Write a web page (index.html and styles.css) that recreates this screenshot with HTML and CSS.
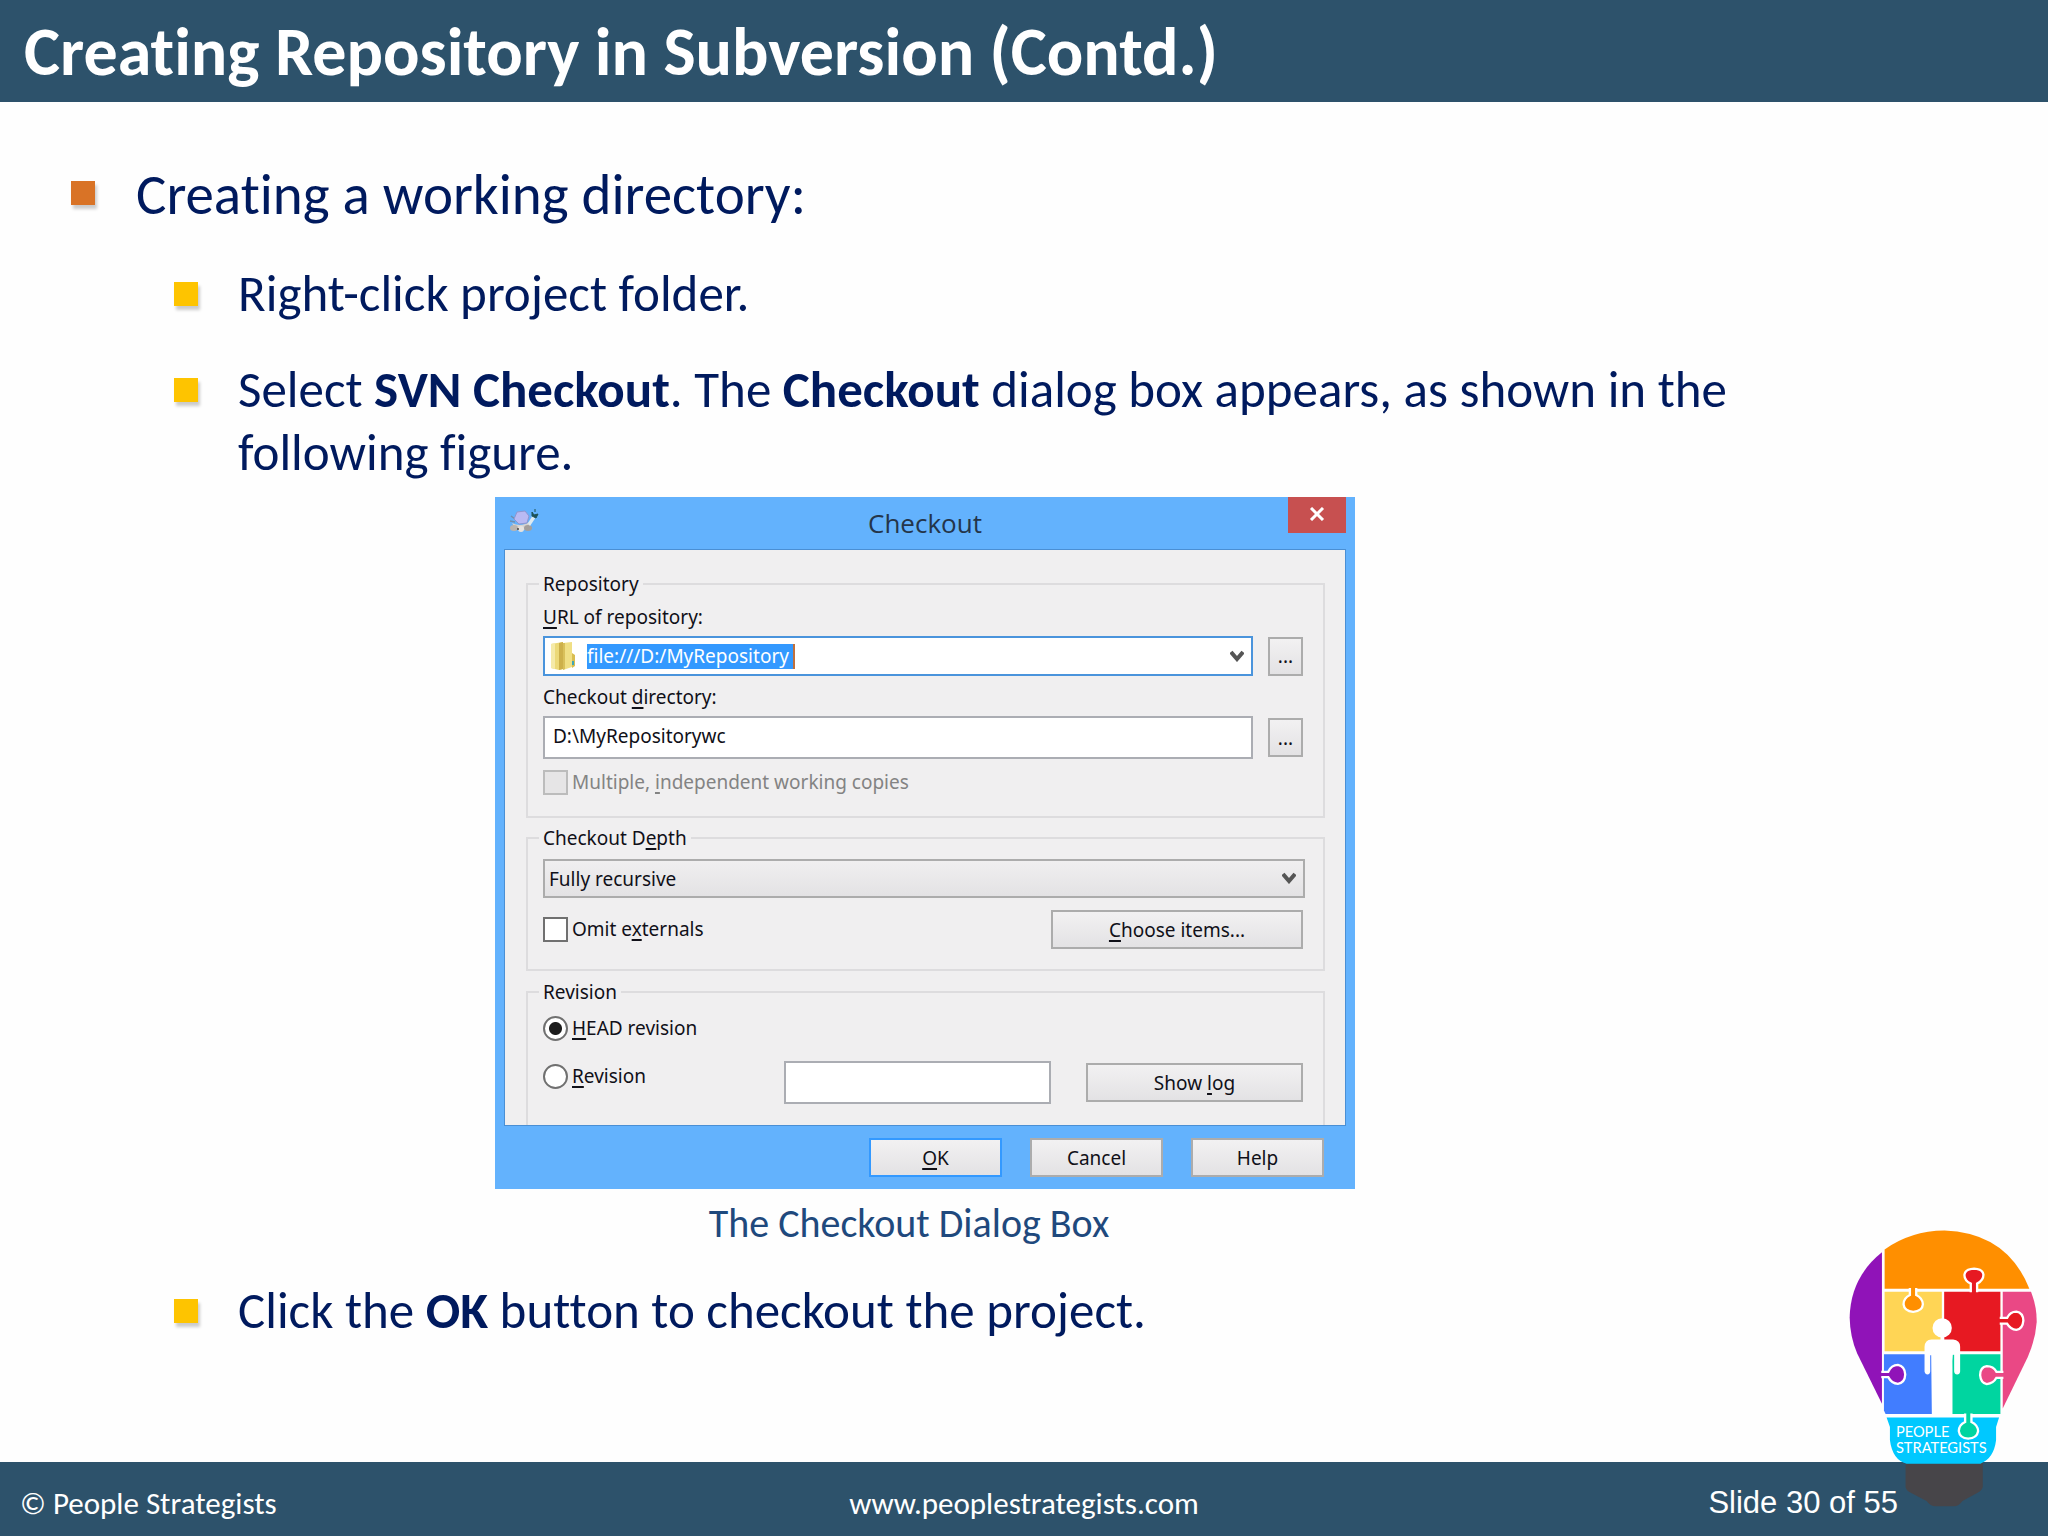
FILE: index.html
```
<!DOCTYPE html>
<html lang="en">
  <head>
    <meta charset="UTF-8" />
    <meta name="viewport" content="width=device-width, initial-scale=1.0" />
    <title>Creating Repository in Subversion</title>
    <link rel="stylesheet" href="styles.css">
  </head>
  <body>
    <header class="header">
      <h1>Creating Repository in Subversion (Contd.)</h1>
    </header>

    <main class="slide">
      <ul class="topics">
        <li>
          <p>Creating a working directory:</p>
          <ul class="steps">
            <li>Right-click project folder.</li>
            <li>
              Select <b>SVN Checkout</b>. The <b>Checkout</b> dialog box
              appears, as shown in the following figure.
            </li>
          </ul>
        </li>
      </ul>

      <figure class="figure">
        <form class="dialog">
          <div class="titlebar">
            <!-- turtle -->
            <svg class="app-icon" viewBox="0 0 30 24" aria-hidden="true">
              <path d="M2 7l4 3M1 12l5 1" stroke="#6f8fb0" stroke-width="1.5" />
              <path d="M3 14q9 5 19-2l-2 7q-7 4-14 0z" fill="#d7d3d0" />
              <ellipse cx="5" cy="19" rx="4" ry="3" fill="#b9b4b0" />
              <ellipse cx="12" cy="20" rx="3" ry="3" fill="#e6e3e0" />
              <ellipse cx="19" cy="19" rx="4" ry="3" fill="#a49f9c" />
              <path d="M19 14L24 6l3 2-6 9z" fill="#dfeaf0" />
              <path d="M8 3l8-1 4 5-2 7-8 1-5-5z" fill="#b9baf3" stroke="#8e96cf" />
              <path d="M23 3l2 3 4-1-2 4-4-2zM26 0v3" fill="#1d5257" stroke="#1d5257" />
              <circle cx="9" cy="20" r="1" fill="#444" />
            </svg>
            <h2>Checkout</h2>
            <button type="button" class="close-btn" aria-label="Close">
              <svg viewBox="0 0 16 14" aria-hidden="true">
                <path d="M2 1l12 12M14 1L2 13" stroke="#fff" stroke-width="3" />
              </svg>
            </button>
          </div>

          <div class="panel">
            <fieldset class="group repository">
              <legend>Repository</legend>
              <label class="caption" for="url"><u>U</u>RL of repository:</label>
              <div class="row">
                <div class="combo">
                  <svg class="folder" viewBox="0 0 26 30" aria-hidden="true">
                    <path d="M1 3l12-2v27l-4 1-8-2z" fill="#ecd978" />
                    <path d="M1 3l4-1v26l-4-1z" fill="#f5eaa8" />
                    <path d="M9 2l4-1v27l-4 1z" fill="#cdb04a" />
                    <path d="M13 2l9-1v25l-9 3z" fill="#f0df84" />
                    <path d="M13 2l2 0v26l-2 1z" fill="#d9c05a" />
                    <path d="M22 12l3 2v11l-3 2z" fill="#d8bd50" />
                    <path d="M22 20h2v4h-2z" fill="#3fa6b4" />
                  </svg>
                  <input type="text" id="url" class="url" value="file:///D:/MyRepository" />
                  <button type="button" class="drop" aria-label="Show recent URLs">
                    <svg class="chevron" viewBox="0 0 14 12" aria-hidden="true">
                      <path d="M1 2l6 7 6-7" />
                    </svg>
                  </button>
                </div>
                <button type="button" class="btn browse" aria-label="Browse repository">...</button>
              </div>
              <label class="caption" for="directory">Checkout <u>d</u>irectory:</label>
              <div class="row">
                <input type="text" id="directory" class="field" value="D:\MyRepositorywc" />
                <button type="button" class="btn browse" aria-label="Browse directory">...</button>
              </div>
              <label class="choice disabled">
                <input type="checkbox" disabled />
                <span>Multiple, <u>i</u>ndependent working copies</span>
              </label>
            </fieldset>

            <fieldset class="group depth">
              <legend><label for="depth">Checkout D<u>e</u>pth</label></legend>
              <div class="select">
                <select id="depth">
                  <option>Fully recursive</option>
                </select>
                <svg class="chevron" viewBox="0 0 14 12" aria-hidden="true">
                  <path d="M1 2l6 7 6-7" />
                </svg>
              </div>
              <div class="row">
                <label class="choice">
                  <input type="checkbox" />
                  <span>Omit e<u>x</u>ternals</span>
                </label>
                <button type="button" class="btn choose"><u>C</u>hoose items...</button>
              </div>
            </fieldset>

            <fieldset class="group revision">
              <legend>Revision</legend>
              <label class="choice">
                <input type="radio" name="revision" checked />
                <span><u>H</u>EAD revision</span>
              </label>
              <div class="row">
                <label class="choice">
                  <input type="radio" name="revision" />
                  <span><u>R</u>evision</span>
                </label>
                <input type="text" class="field number" aria-label="Revision number" />
                <button type="button" class="btn log">Show <u>l</u>og</button>
              </div>
            </fieldset>
          </div>

          <div class="actions">
            <button type="button" class="btn ok"><u>O</u>K</button>
            <button type="button" class="btn">Cancel</button>
            <button type="button" class="btn">Help</button>
          </div>
        </form>
        <figcaption>The Checkout Dialog Box</figcaption>
      </figure>

      <ul class="steps">
        <li>Click the <b>OK</b> button to checkout the project.</li>
      </ul>
    </main>

    <footer class="footer">
      <span>© People Strategists</span>
      <a href="#">www.peoplestrategists.com</a>
      <span class="page">Slide 30 of 55</span>

      <svg class="logo" viewBox="85 55 565 835" role="img" aria-label="People Strategists">
        <path d="M255 755H487V830Q484 842 470 848L426 872Q415 888 400 888H345Q330 888 318 872L272 848Q257 842 255 830z" fill="#474549" />
        <path d="M184 125V580L110 430Q88 380 87 320Q90 200 184 125z" fill="#9013b8" />
        <path d="M192 116Q270 60 372 59Q560 66 627 234H192z" fill="#ff8f00" />
        <path d="M192 243H364V422H192z" fill="#ffd555" />
        <path d="M371 243H540V422H371z" fill="#e71922" />
        <path d="M547 243H632Q650 290 649 335Q646 385 622 440L547 594z" fill="#ea4885" />
        <path d="M190 431H364V611H195L190 600z" fill="#417dff" />
        <path d="M371 431H540V611H371z" fill="#00d5a0" />
        <path d="M198 621H536L527 650V690Q520 745 480 760H258Q216 750 208 690V650z" fill="#00c8ff" />
        <!-- puzzle knobs -->
        <g stroke="#fff" stroke-width="7">
          <path d="M268 232V253Q249 262 249 281Q251 301 278 304Q306 301 307 281Q306 262 287 253V232" fill="#ff8f00" />
          <path d="M451 245V219Q431 209 432 192Q434 175 461 174Q487 175 489 192Q489 209 470 219V245" fill="#e71922" />
          <path d="M538 322H560Q569 303 588 303Q608 306 609 330Q607 355 588 358Q570 356 560 339H538" fill="#e71922" />
          <path d="M182 484H203Q212 463 232 463Q253 467 254 492Q253 517 232 520Q213 519 203 500H182" fill="#9013b8" />
          <path d="M549 484H528Q519 467 499 467Q479 470 479 494Q481 518 499 521Q519 519 528 502H549" fill="#ea4885" />
          <path d="M434 609V635Q415 644 415 662Q418 683 443 685Q470 683 473 662Q472 644 453 635V609" fill="#00d5a0" />
        </g>
        <!-- person -->
        <circle cx="365" cy="352" r="29" fill="#fff" />
        <path d="M360 378h11v9h27q21 2 21 22v74q-1 9-9 9t-9-9v-50h-4q-2 20-1 40v142h-62l-2-181h-3v49q-1 9-8 9t-9-9v-74q1-21 21-22h27z" fill="#fff" />
        <text x="226" y="679">PEOPLE</text>
        <text x="226" y="729">STRATEGISTS</text>
      </svg>
    </footer>
  </body>
</html>
```

FILE: styles.css
```
* {
  box-sizing: border-box;
}

body {
  margin: 0;
  min-height: 100vh;
  display: flex;
  flex-direction: column;
  background-color: #fefefe;
  color: #001a5e;
  font-family: Carlito, Calibri, Lato, sans-serif;
  font-variant-ligatures: none;
}

h1,
h2,
p,
ul,
figure {
  margin: 0;
  padding: 0;
}

/* top bar */
.header {
  background-color: #2d526b;
  color: white;
  padding: 16px 24px 14px;
}

.header h1 {
  font-size: 68px;
  line-height: 72px;
}

/* slide text */
.slide {
  flex: 1;
  padding: 59px 240px 32px 0;
}

.topics,
.steps {
  list-style: none;
}

.topics > li {
  position: relative;
  padding-left: 136px;
  font-size: 57px;
  line-height: 68px;
}

.steps > li {
  position: relative;
  margin-top: 33px;
  padding-left: 238px;
  font-size: 51px;
  line-height: 63px;
}

.topics .steps > li {
  padding-left: 102px;
}

.topics > li::before,
.steps > li::before {
  content: "";
  position: absolute;
  top: 20px;
  left: 71px;
  width: 24px;
  height: 24px;
  background-color: #d97326;
  box-shadow: 2px 4px 3px rgba(0, 0, 0, 0.2);
}

.steps > li::before {
  left: 174px;
  background-color: #fec400;
}

.topics .steps > li::before {
  left: 38px;
}

/* figure */
.figure {
  width: 860px;
  max-width: 100%;
  margin: 13px 0 0 495px;
}

.figure figcaption {
  margin-top: 13px;
  padding-right: 32px;
  color: #1f497d;
  font-size: 40px;
  line-height: 44px;
  text-align: center;
}

/* dialog window */
.dialog {
  padding: 0 9px 12px;
  background-color: #63b2fd;
  color: #101018;
  font-family: Tahoma, "Noto Sans", sans-serif;
  font-size: 19px;
  line-height: 24px;
}

.dialog u {
  text-decoration-thickness: 2px;
  text-underline-offset: 3px;
}

.titlebar {
  display: grid;
  grid-template-columns: 58px 1fr 58px;
  height: 52px;
}

.titlebar h2 {
  color: #24354a;
  font-family: "Segoe UI", "Open Sans", sans-serif;
  font-size: 26px;
  font-weight: normal;
  line-height: 52px;
  text-align: center;
}

.app-icon {
  width: 30px;
  height: 24px;
  margin: 12px 0 0 5px;
}

.close-btn {
  height: 36px;
  padding: 0;
  border: none;
  background-color: #c75050;
}

.close-btn svg {
  width: 16px;
  height: 14px;
}

.panel {
  padding: 22px 20px 0 21px;
  border: 1px solid #4a8fd4;
  background-color: #f0eff0;
}

.group {
  margin: 0;
  padding: 0 20px 0 15px;
  border: 2px solid #dddcde;
}

.group legend {
  margin-left: -4px;
  padding: 0 4px;
}

.row {
  display: flex;
  align-items: center;
  gap: 15px;
}

.caption {
  display: block;
  padding: 9px 0 7px;
}

.repository {
  padding-bottom: 21px;
}

.repository .choice {
  margin-top: 11px;
}

.combo,
.field {
  flex: 1;
  min-width: 0;
  background-color: white;
  border: 2px solid #abadb3;
}

.combo {
  display: flex;
  align-items: center;
  height: 40px;
  padding: 0 7px 0 5px;
  border-color: #4a94dc;
}

.folder {
  width: 26px;
  height: 30px;
  margin-right: 11px;
}

.url {
  width: 208px;
  height: 25px;
  padding: 0;
  border: none;
  border-right: 2px solid #c0703c;
  background-color: #3399ff;
  color: white;
  font: inherit;
}

.drop {
  margin-left: auto;
  padding: 0;
  border: none;
  background: none;
}

.chevron {
  display: block;
  width: 14px;
  height: 12px;
  fill: none;
  stroke: #555;
  stroke-width: 4;
}

.field {
  height: 43px;
  padding: 0 8px 4px;
  color: inherit;
  font: inherit;
}

.btn {
  height: 39px;
  padding: 0;
  border: 2px solid #acacac;
  background: linear-gradient(#f2f1f2, #e3e2e4);
  color: inherit;
  font: inherit;
}

.browse {
  width: 35px;
}

.choice {
  display: flex;
  align-items: center;
  gap: 4px;
  line-height: 25px;
}

.choice input {
  appearance: none;
  width: 25px;
  height: 25px;
  margin: 0;
  border: 2px solid #707070;
  background-color: white;
}

.choice input[type="radio"] {
  border-radius: 50%;
}

.choice input[type="radio"]:checked {
  background: radial-gradient(circle, #1c1c1c 6px, white 7px);
}

.disabled {
  color: #838383;
}

.choice input:disabled {
  border-color: #bcbcbc;
  background-color: #e6e5e6;
}

.depth {
  margin-top: 8px;
  padding-bottom: 20px;
}

.select {
  position: relative;
  margin: 9px -2px 12px 0;
}

.select select {
  appearance: none;
  display: block;
  width: 100%;
  height: 39px;
  padding: 0 4px;
  border: 2px solid #acacac;
  border-radius: 0;
  background: linear-gradient(#f0eff0, #e3e2e4);
  color: inherit;
  font: inherit;
}

.select .chevron {
  position: absolute;
  top: 13px;
  right: 9px;
  pointer-events: none;
}

.choose {
  width: 252px;
  margin-left: auto;
}

.revision {
  margin-top: 9px;
  padding-bottom: 21px;
  border-bottom: none;
}

.revision > .choice {
  padding: 12px 0 20px;
}

.revision .row {
  gap: 35px;
}

.revision .row .choice {
  flex: 1;
  align-self: flex-start;
  padding-top: 3px;
}

.number {
  flex: 0 1 267px;
}

.log {
  width: 217px;
}

.actions {
  display: flex;
  justify-content: flex-end;
  gap: 28px;
  padding: 12px 22px 0 0;
}

.actions .btn {
  width: 133px;
}

.actions .ok {
  border-color: #3399ff;
}

/* bottom bar */
.footer {
  position: relative;
  display: grid;
  grid-template-columns: 1fr auto 1fr;
  align-items: center;
  height: 74px;
  padding: 7px 20px 0;
  background-color: #2d526b;
  color: white;
  font-size: 31px;
}

.footer a {
  color: white;
  text-decoration: none;
}

.footer .page {
  padding-right: 130px;
  font-family: "Liberation Sans", Arial, sans-serif;
  text-align: right;
}

/* bulb hangs over the bottom bar */
.logo {
  position: absolute;
  right: 11px;
  bottom: 29px;
  width: 188px;
  height: 278px;
}

.logo text {
  fill: white;
  font-family: Lato, sans-serif;
  font-size: 44px;
}
```
